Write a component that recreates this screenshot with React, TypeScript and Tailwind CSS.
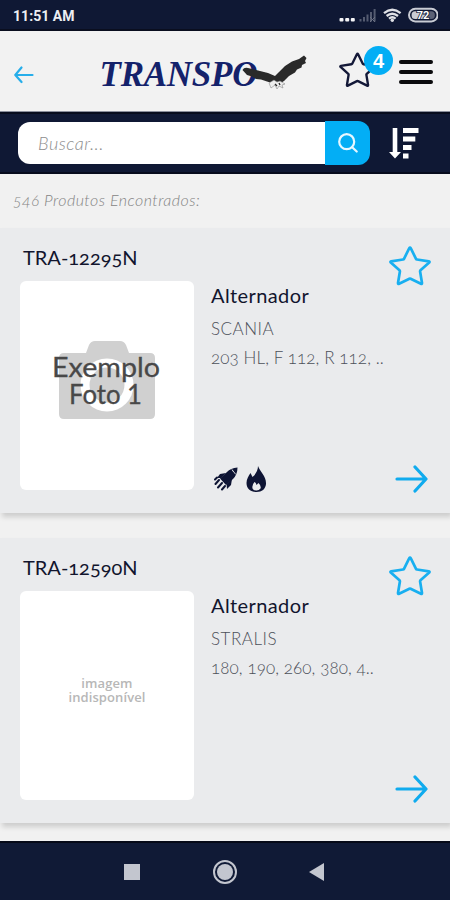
import React, { useState } from 'react';

interface Product {
  code: string;
  name: string;
  brand: string;
  models: string;
  hasPhoto: boolean;
  highlights: boolean;
}

const products: Product[] = [
  {
    code: 'TRA-12295N',
    name: 'Alternador',
    brand: 'SCANIA',
    models: '203 HL, F 112, R 112, ..',
    hasPhoto: true,
    highlights: true,
  },
  {
    code: 'TRA-12590N',
    name: 'Alternador',
    brand: 'STRALIS',
    models: '180, 190, 260, 380, 4..',
    hasPhoto: false,
    highlights: false,
  },
];

const StarIcon = ({ className }: { className: string }) => (
  <svg viewBox="0 0 42 40" className={className} fill="none" stroke="currentColor" strokeWidth="2.7" strokeLinejoin="round">
    <path d="M20.300 2.200Q21 1 21.700 2.200L27 12.800Q27.300 13.400 28 13.500L39.800 15.300Q41 15.600 40.200 16.500L31.500 24.300Q31 24.800 31.100 25.500L33 37Q33 38.300 31.900 37.800L21.600 32.700Q21 32.400 20.400 32.700L10.100 37.800Q9 38.300 9 37L10.900 25.500Q11 24.800 10.500 24.300L1.800 16.500Q1 15.600 2.200 15.300L14 13.500Q14.700 13.400 15 12.800Z" />
  </svg>
);

const StatusBar = () => (
  <div className="flex h-[31px] shrink-0 items-center justify-between border-b-2 border-[#0a0e1f] bg-[#0f1834] pl-[13px] pr-3 pt-[3px]">
    <span className="font-['Roboto'] text-[14px] font-bold tracking-[0.05px] text-[#eceef2]">11:51 AM</span>
    <svg viewBox="0 0 100 18" className="h-[18px] w-[100px]">
      <g fill="#f4f4f6">
        <rect x="1.500" y="11" width="4" height="3.600" rx="1" />
        <rect x="7.200" y="11" width="4" height="3.600" rx="1" />
        <rect x="12.800" y="11" width="4" height="3.600" rx="1" />
      </g>
      <g fill="#545b70">
        <rect x="21.500" y="12" width="2" height="2.500" />
        <rect x="25" y="10" width="2" height="4.500" />
        <rect x="28.500" y="7.500" width="2" height="7" />
        <rect x="32" y="5" width="2" height="9.500" />
        <rect x="35.600" y="2" width="2" height="12.500" />
      </g>
      <path d="M32 10l5 5M37 10l-5 5" stroke="#6b7183" strokeWidth="1" />
      <g fill="none" stroke="#dfe1e6" strokeWidth="2.300">
        <path d="M46 6.200Q54.300 -.6 62.600 6.200" />
        <path d="M48.600 9Q54.300 4.400 60 9" />
        <path d="M51 11.600Q54.300 9 57.600 11.600" />
      </g>
      <circle cx="54.300" cy="13.200" r="1.700" fill="#dfe1e6" />
      <rect x="71" y="1.800" width="28.600" height="12.600" rx="6.300" fill="none" stroke="#c9ccd4" strokeWidth="2" />
      <rect x="73.600" y="4.200" width="17" height="7.800" rx="3.500" fill="#c9ccd4" />
      <rect x="88" y="4.200" width="8.800" height="7.800" rx="3.500" fill="#5b6175" />
      <text x="85" y="12.200" textAnchor="middle" fontFamily="Roboto" fontWeight="700" fontSize="11" fill="#fff" stroke="#0f1834" strokeWidth="1.600" paintOrder="stroke">72</text>
    </svg>
  </div>
);

const Logo = () => (
  <svg viewBox="0 0 210 40" className="h-10 w-[210px]">
    <text x="1.500" y="33" fontFamily="Liberation Serif, serif" fontSize="35" fontWeight="700" fontStyle="italic" textLength="158" fill="#14226b">
      TRANSPO
    </text>
    <path d="M144.500 17Q146 14 150 15L160 17.500L170 20L177 23L181 19L187 13L194 8.500L201 6L206 2.500L208.500 5L207 8L208 10L204 12L203.500 14.500L199 16.500L197 19.500L191 23L186 28L181 31L175 30.500L169 28.500L163 26.500L158 26L154 23.500L149 22Z" fill="#2a2a2a" />
    <path d="M171 30l5-3 3 2 3-1 5 3-3 1 1 3-4-2-2 3-2-4-4 3z" fill="#ededed" stroke="#8a8a8a" strokeWidth=".6" />
    <path d="M177 27l3-3M177 31l2 2M181 30l1 2" stroke="#2a2a2a" strokeWidth="1.300" />
  </svg>
);

const Header = () => (
  <header className="flex h-[81px] shrink-0 items-center border-b border-[#8b8f9c] bg-[#f2f2f2] pl-3.5 pr-[17px]">
    <button aria-label="Voltar">
      <svg viewBox="0 0 20 18" className="h-[18px] w-5 translate-y-1" fill="none" stroke="#27aeea" strokeWidth="2.200" strokeLinecap="round" strokeLinejoin="round">
        <path d="M18.500 9H1.500M7.500 1.500L1.300 9l6.200 7" />
      </svg>
    </button>
    <div className="ml-16 mt-[3px]">
      <Logo />
    </div>
    <div className="relative ml-[31px] h-10 w-[60px]">
      <StarIcon className="h-[38px] w-[37px] text-[#141938]" />
      <span className="absolute left-[25px] top-[-5px] flex h-[29px] w-[29px] items-center justify-center rounded-full bg-[#03aef5] font-['Liberation_Sans'] text-[20px] font-bold text-white">
        4
      </span>
    </div>
    <button aria-label="Menu" className="ml-auto mt-0.5 flex w-[34px] flex-col gap-1.5">
      <span className="h-1 rounded-full bg-[#0b0b0d]" />
      <span className="h-1 rounded-full bg-[#0b0b0d]" />
      <span className="h-1 rounded-full bg-[#0b0b0d]" />
    </button>
  </header>
);

const SearchBar = () => {
  const [query, setQuery] = useState('');

  return (
    <div className="flex h-[62px] shrink-0 items-center border-y-2 border-t-[#070c1d] border-b-[#070c1d] bg-[#0f1834] pl-[18px]">
      <input
        value={query}
        onChange={(e) => setQuery(e.target.value)}
        placeholder="Buscar..."
        className="h-[42px] w-[307px] rounded-l-xl bg-white pl-5 font-['Lato'] text-[18px] font-light italic tracking-[0.5px] outline-none placeholder:text-[#8e8e8e]"
      />
      <button aria-label="Pesquisar" className="flex h-11 w-[45px] items-center justify-center rounded-r-xl bg-[#03aef5]">
        <svg viewBox="0 0 20 20" className="h-5 w-5" fill="none" stroke="#e6f7ff" strokeWidth="2.200" strokeLinecap="round">
          <circle cx="8.700" cy="8.700" r="7.500" />
          <path d="M14.200 14.200l4.500 4.300" />
        </svg>
      </button>
      <svg viewBox="0 0 30 33" className="ml-[19px] h-[33px] w-[30px]" fill="#fff">
        <path d="M3.700 1h4.600v24h3.700L6 31.500 0 25h3.700z" />
        <rect x="14" y="1" width="15.500" height="5" />
        <rect x="14" y="9.500" width="12.300" height="5" />
        <rect x="14" y="18" width="8.500" height="5" />
        <rect x="14" y="26.500" width="5.500" height="5" />
      </svg>
    </div>
  );
};

const ProductPhoto = ({ available }: { available: boolean }) => (
  <div className="grid h-[209px] w-[174px] shrink-0 place-items-center rounded-md bg-white">
    {available ? (
      <svg viewBox="0 0 110 80" className="h-20 w-[110px] -translate-y-1.5">
        <path d="M12 13h22l3-8q2-4 6-4h25q4 0 6 4l3 8h21q5 0 5 5v56q0 5-5 5H12q-5 0-5-5V18q0-5 5-5z" fill="#d0d0d0" />
        <circle cx="55" cy="45" r="26.500" fill="#fff" />
        <circle cx="55" cy="45" r="17.500" fill="#d0d0d0" />
        <g fill="#484848" stroke="#484848" strokeWidth=".3" fontFamily="Lato, sans-serif" fontSize="26">
          <text x="0" y="36.500" textLength="108" lengthAdjust="spacingAndGlyphs">Exemplo</text>
          <text x="17" y="63.500" textLength="73" lengthAdjust="spacingAndGlyphs">Foto 1</text>
        </g>
      </svg>
    ) : (
      <p className="translate-y-[-6px] text-center font-['Open_Sans'] text-[13px] font-semibold leading-[14px] tracking-[0.1px] text-[#b7b7b7]">
        imagem
        <br />
        indisponível
      </p>
    )}
  </div>
);

const Highlights = () => (
  <svg viewBox="0 0 54 28" className="h-7 w-[54px]" fill="#0e1434">
    <path d="M13 7Q16.500 3 23.500 2.500Q23.500 9.500 19 14L12 20L6 13.500Z" />
    <path d="M12 8L6 9L3 13L7 13zM18 14L17 20L13 24L12.500 19z" />
    <path d="M18 4.500q2 3.500 3.700 4.500" fill="none" stroke="#eaebed" strokeWidth="1" />
    <path d="M5 15l-3.500 4M8 18l-4 4.500M11 21l-3 3.500M1 14.500l2-2" fill="none" stroke="#0e1434" strokeWidth="2" strokeLinecap="round" />
    <path d="M44 1C46 7 52.500 11 52 19C51.500 24 48 27 42.500 27C36.500 27 32.500 23.500 32.500 18C32.500 14 34.500 11 36.500 8L38.500 12C42 9 44 5 44 1Z" />
    <path d="M40.500 17Q42 17.500 42.500 20L44.500 18Q47.500 21 46.500 23.500Q45 25.700 42 25.500Q38.300 25.200 38.300 22Q38.500 19 40.500 17Z" fill="#eaebed" />
  </svg>
);

const ProductCard = ({ product }: { product: Product }) => (
  <article className="h-[285px] shrink-0 bg-[#eaebed] pl-5 pr-[19px] shadow-[2px_4px_5px_rgba(0,0,0,0.15)]">
    <div className="flex h-[53px] items-start justify-between">
      <h2 className="ml-[3px] mt-[17px] font-['Lato'] text-[20px] leading-[25px] text-[#12152d] oldstyle-nums">
        {product.code}
      </h2>
      <button aria-label="Favoritar" className="mt-[18px]">
        <StarIcon className="h-10 w-[42px] text-[#18aff0]" />
      </button>
    </div>
    <div className="flex">
      <ProductPhoto available={product.hasPhoto} />
      <div className="ml-[17px] flex grow flex-col font-['Lato'] text-[17px] font-light text-[#4c5059]">
        <h3 className="mt-0.5 text-[20px] font-normal leading-[25px] tracking-[0.4px] text-[#12152d]">{product.name}</h3>
        <p className="mt-2 leading-[25px] tracking-[0.5px]">{product.brand}</p>
        <p className="mt-1 leading-[25px] tracking-[0.1px] oldstyle-nums">{product.models}</p>
        <div className="mb-[-3px] mt-auto flex h-7 items-end justify-between pr-[3px]">
          <div className="ml-[3px]">{product.highlights && <Highlights />}</div>
          <svg viewBox="0 0 33 28" className="h-7 w-[33px]" fill="none" stroke="#10abee" strokeWidth="3.200" strokeLinecap="round" strokeLinejoin="round">
            <path d="M2 14h28M20 2l11 12-11 12" />
          </svg>
        </div>
      </div>
    </div>
  </article>
);

const NavigationBar = () => (
  <nav className="flex h-[59px] shrink-0 items-center border-t-2 border-[#060a18] bg-[#101a36] pl-[124px]">
    <span className="h-4 w-4 bg-[#c3c6cf]" />
    <span className="ml-[73px] grid h-6 w-6 place-items-center rounded-full border-2 border-[#c3c6cf]">
      <span className="h-4 w-4 rounded-full bg-[#c3c6cf]" />
    </span>
    <svg viewBox="0 0 15 18" className="ml-[72px] h-[18px] w-[15px]" fill="#c3c6cf">
      <path d="M0 9L15 0V18Z" />
    </svg>
  </nav>
);

const App = () => {
  return (
    <div className="flex h-[900px] w-[450px] flex-col overflow-hidden bg-[#f1f1f1]">
      <StatusBar />
      <Header />
      <SearchBar />
      <main className="flex min-h-0 grow flex-col">
        <p className="h-[54px] shrink-0 pl-[13px] pt-[15px] font-['Lato'] text-[16px] font-light italic leading-[22px] tracking-[0.45px] text-[#858585] oldstyle-nums">
          546 Produtos Encontrados:
        </p>
        <div className="flex flex-col gap-[25px]">
          {products.map((product) => (
            <ProductCard key={product.code} product={product} />
          ))}
        </div>
      </main>
      <NavigationBar />
    </div>
  );
};

export default App;
